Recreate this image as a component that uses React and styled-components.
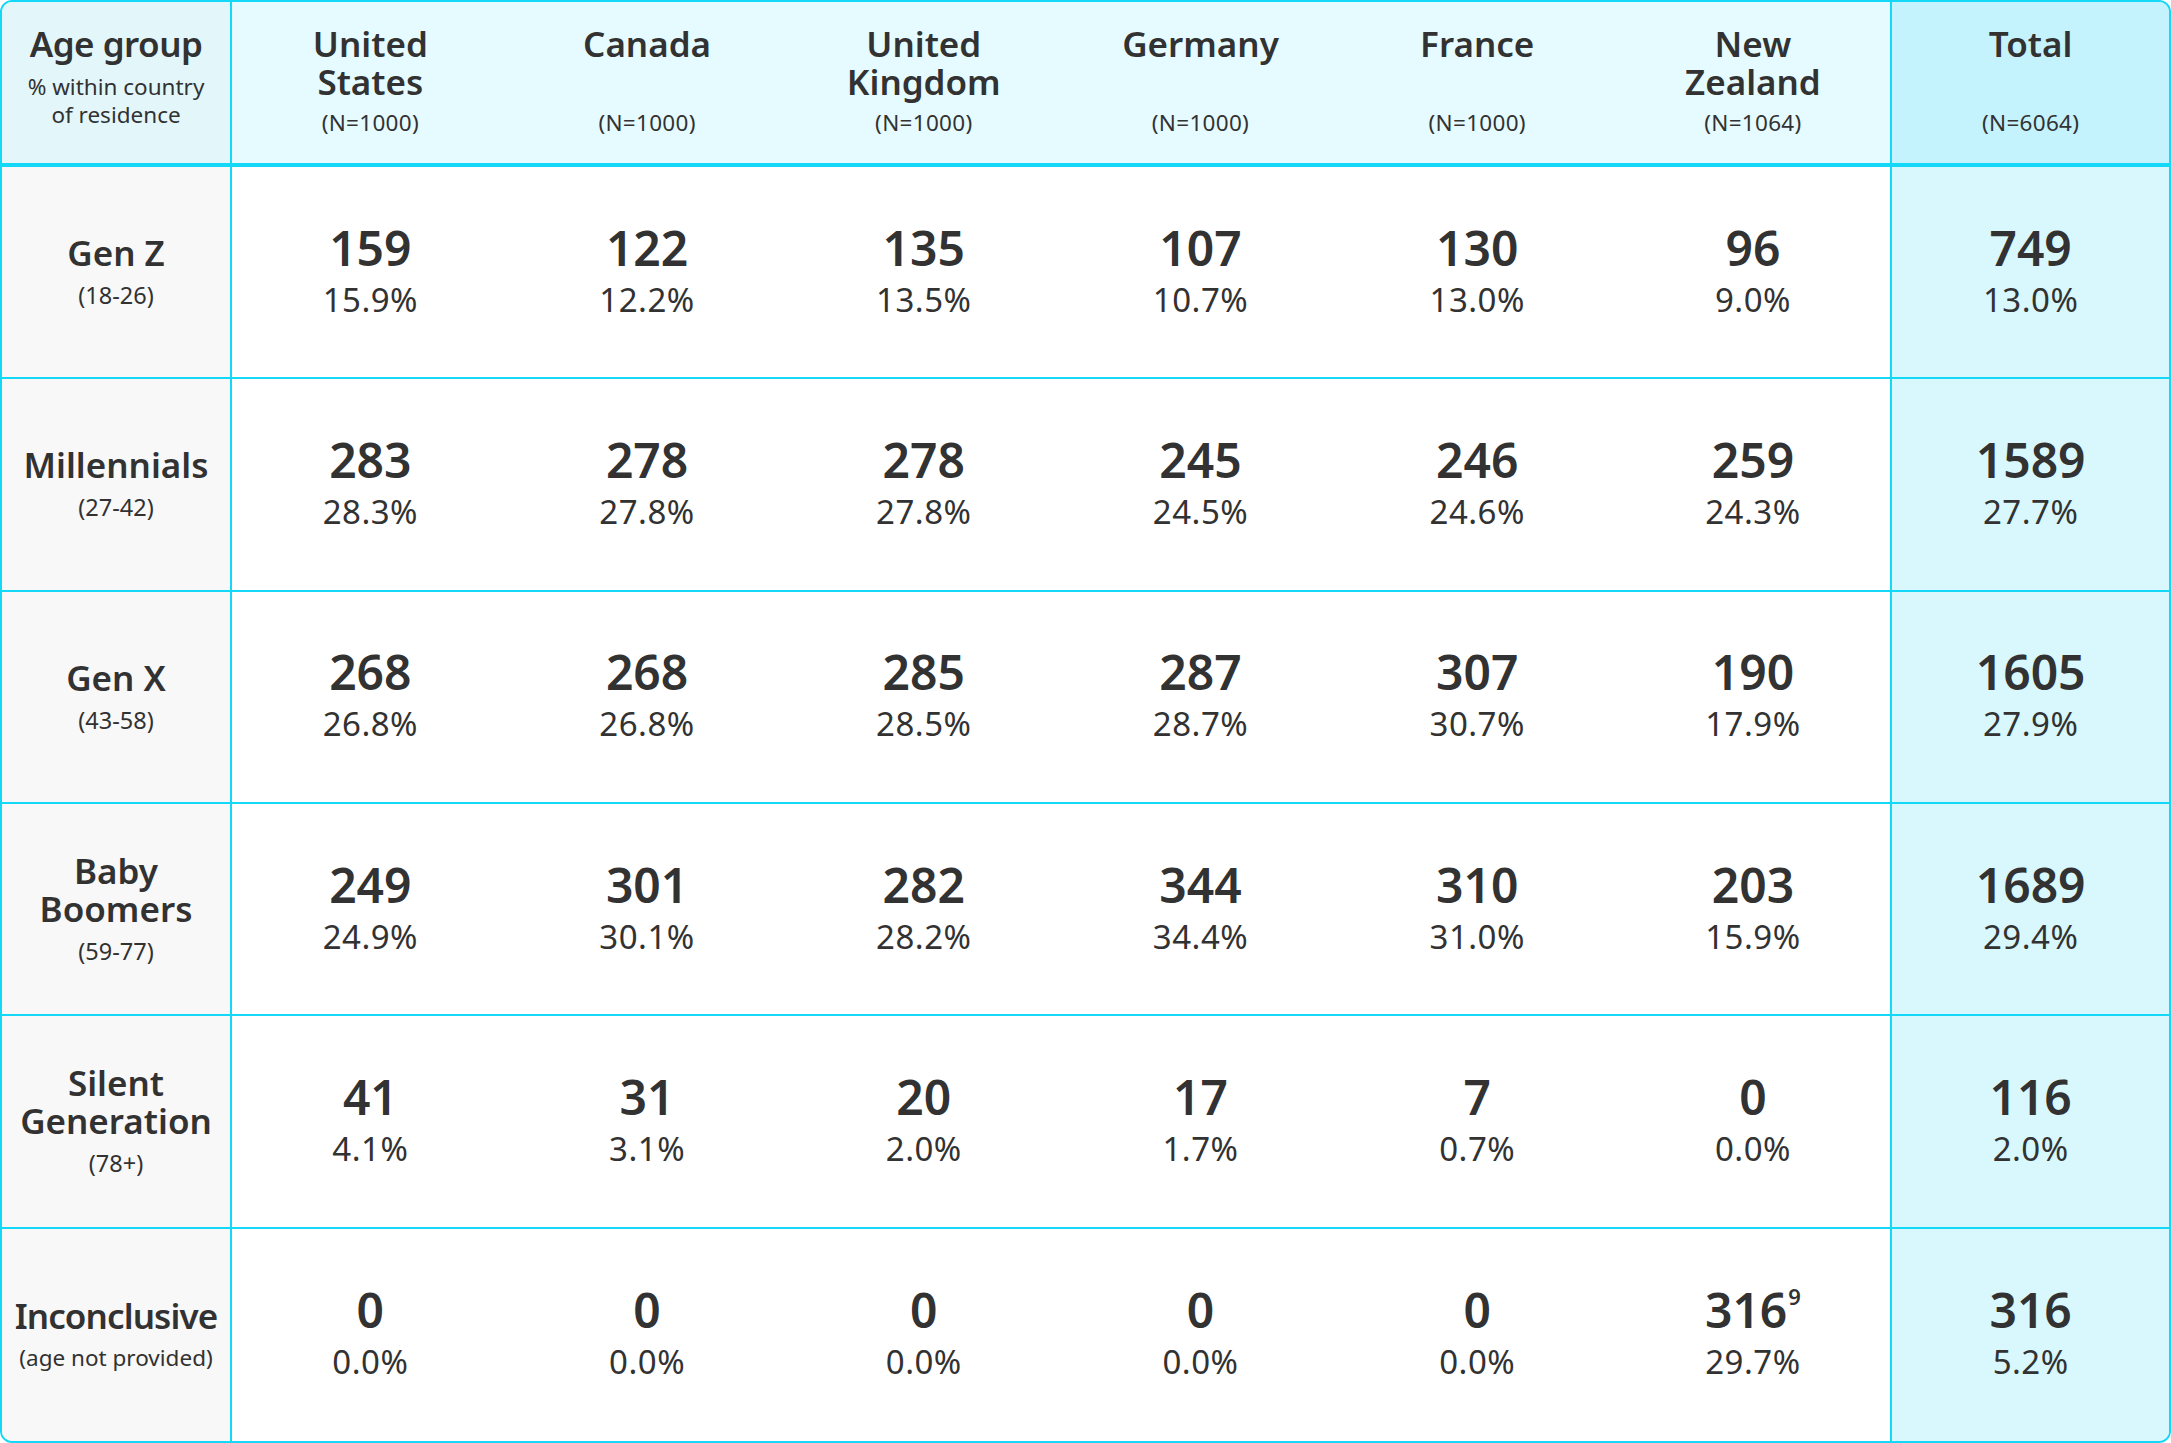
import React from "react";
import styled, { createGlobalStyle, css } from "styled-components";

const Global = createGlobalStyle`
  html, body { margin: 0; padding: 0; background: #ffffff; }
  body { font-family: "Noto Sans", "Open Sans", sans-serif; color: #323232; }
  * { box-sizing: border-box; }
`;

const LINE = "#14d8f7";

const Table = styled.div`
  width: 2171px;
  height: 1443px;
  border: 2px solid ${LINE};
  border-radius: 12px;
  overflow: hidden;
  display: grid;
  grid-template-columns: 230px repeat(7, 1fr);
  grid-template-rows: 165px repeat(6, 1fr);
`;

const Cell = styled.div`
  border-bottom: 2px solid ${LINE};
  display: flex;
  flex-direction: column;
  align-items: center;
  text-align: center;
  background: ${(p) => p.$bg};
  ${(p) => p.$divider && css`border-right: 2px solid ${LINE};`}
  ${(p) => p.$bottom && css`border-bottom: none;`}
`;

const HeadCell = styled(Cell)`
  border-bottom: 4px solid ${LINE};
  padding-top: 23px;
`;

const BodyCell = styled(Cell)`
  justify-content: center;
`;

const HeadTitle = styled.div`
  font-weight: 600;
  font-size: 35px;
  line-height: 38px;
  min-height: 76px;
`;

const CornerTitle = styled.div`
  font-weight: 600;
  font-size: 35px;
  line-height: 38px;
  letter-spacing: -0.5px;
`;

const CornerSub = styled.div`
  font-size: 22.5px;
  line-height: 28px;
  margin-top: 10px;
`;

const HeadN = styled.div`
  font-size: 22.5px;
  line-height: 28px;
  margin-top: 8px;
  letter-spacing: 0.3px;
`;

const RowTitle = styled.div`
  font-weight: 600;
  font-size: 35px;
  line-height: 38px;
  letter-spacing: ${(p) => (p.$tight ? "-0.9px" : "0")};
`;

const RowSub = styled.div`
  font-size: ${(p) => (p.$small ? "22.5px" : "23.5px")};
  line-height: 30px;
  margin-top: 8px;
`;

const Count = styled.div`
  font-weight: 600;
  font-size: 48px;
  line-height: 54px;
  margin-top: -4px;
`;

const Sup = styled.sup`
  font-size: 22px;
  vertical-align: top;
  line-height: 26px;
  margin-left: 1px;
`;

const Pct = styled.div`
  font-size: 33px;
  line-height: 40px;
  margin-top: 5px;
  letter-spacing: 0.5px;
`;

const countries = [
  { name: ["United", "States"], n: "1000" },
  { name: ["Canada"], n: "1000" },
  { name: ["United", "Kingdom"], n: "1000" },
  { name: ["Germany"], n: "1000" },
  { name: ["France"], n: "1000" },
  { name: ["New", "Zealand"], n: "1064", divider: true },
  { name: ["Total"], n: "6064", total: true },
];

const rows = [
  {
    label: ["Gen Z"],
    sub: "(18-26)",
    data: [["159", "15.9%"], ["122", "12.2%"], ["135", "13.5%"], ["107", "10.7%"], ["130", "13.0%"], ["96", "9.0%"], ["749", "13.0%"]],
  },
  {
    label: ["Millennials"],
    sub: "(27-42)",
    data: [["283", "28.3%"], ["278", "27.8%"], ["278", "27.8%"], ["245", "24.5%"], ["246", "24.6%"], ["259", "24.3%"], ["1589", "27.7%"]],
  },
  {
    label: ["Gen X"],
    sub: "(43-58)",
    data: [["268", "26.8%"], ["268", "26.8%"], ["285", "28.5%"], ["287", "28.7%"], ["307", "30.7%"], ["190", "17.9%"], ["1605", "27.9%"]],
  },
  {
    label: ["Baby", "Boomers"],
    sub: "(59-77)",
    data: [["249", "24.9%"], ["301", "30.1%"], ["282", "28.2%"], ["344", "34.4%"], ["310", "31.0%"], ["203", "15.9%"], ["1689", "29.4%"]],
  },
  {
    label: ["Silent", "Generation"],
    sub: "(78+)",
    data: [["41", "4.1%"], ["31", "3.1%"], ["20", "2.0%"], ["17", "1.7%"], ["7", "0.7%"], ["0", "0.0%"], ["116", "2.0%"]],
  },
  {
    label: ["Inconclusive"],
    sub: "(age not provided)",
    tight: true,
    data: [["0", "0.0%"], ["0", "0.0%"], ["0", "0.0%"], ["0", "0.0%"], ["0", "0.0%"], ["316", "29.7%", "9"], ["316", "5.2%"]],
  },
];

const lines = (arr) =>
  arr.map((t, i) => (
    <React.Fragment key={i}>
      {i > 0 && <br />}
      {t}
    </React.Fragment>
  ));

export default function App() {
  return (
    <>
      <Global />
      <Table>
        <HeadCell $bg="#e3f7fb" $divider>
          <CornerTitle>Age group</CornerTitle>
          <CornerSub>
            % within country
            <br />
            of residence
          </CornerSub>
        </HeadCell>
        {countries.map((c, i) => (
          <HeadCell key={i} $bg={c.total ? "#c5f3fd" : "#e6fbff"} $divider={c.divider}>
            <HeadTitle>{lines(c.name)}</HeadTitle>
            <HeadN>(N={c.n})</HeadN>
          </HeadCell>
        ))}
        {rows.map((r, ri) => {
          const bottom = ri === rows.length - 1;
          return (
            <React.Fragment key={ri}>
              <BodyCell $bg="#f8f8f8" $bottom={bottom} $divider>
                <RowTitle $tight={r.tight}>{lines(r.label)}</RowTitle>
                <RowSub $small={r.tight}>{r.sub}</RowSub>
              </BodyCell>
              {r.data.map((d, di) => {
                const total = di === r.data.length - 1;
                return (
                  <BodyCell
                    key={di}
                    $bg={total ? "#d8f8fd" : "#ffffff"}
                    $divider={countries[di].divider}
                    $bottom={bottom}
                  >
                    <Count>
                      {d[0]}
                      {d[2] && <Sup>{d[2]}</Sup>}
                    </Count>
                    <Pct>{d[1]}</Pct>
                  </BodyCell>
                );
              })}
            </React.Fragment>
          );
        })}
      </Table>
    </>
  );
}
